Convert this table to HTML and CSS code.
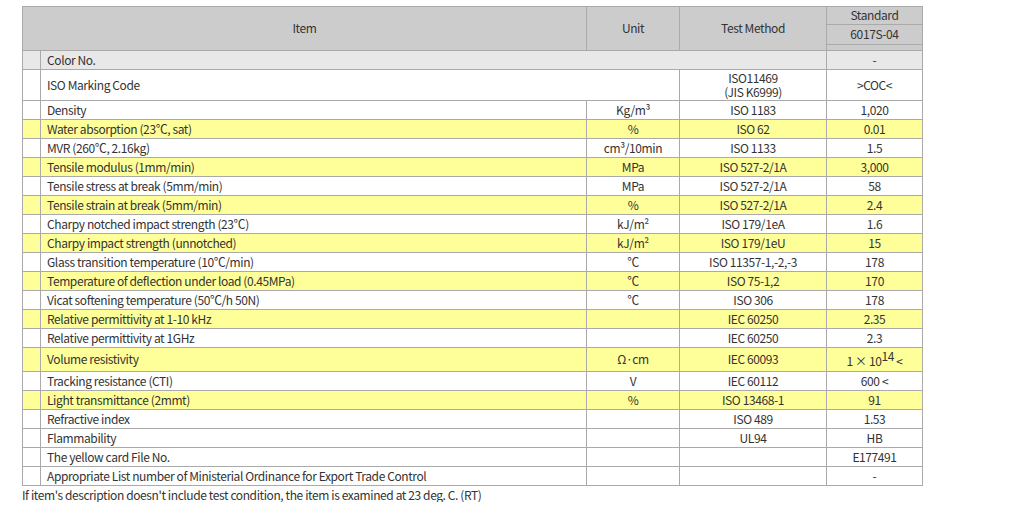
FILE: index.html
```html
<!DOCTYPE html>
<html lang="en">
<head>
<meta charset="utf-8">
<title>Properties</title>
<link rel="stylesheet" href="styles.css">
</head>
<body>
<div class="wrap">
<table class="spec">
  <colgroup>
    <col class="c-idx"><col class="c-item"><col class="c-unit"><col class="c-test"><col class="c-std">
  </colgroup>
  <thead>
    <tr class="h1">
      <th colspan="2" rowspan="3">Item</th>
      <th rowspan="3">Unit</th>
      <th rowspan="3">Test Method</th>
      <th>Standard</th>
    </tr>
    <tr class="h2"><th>6017S-04</th></tr>
    <tr class="h3"><th></th></tr>
  </thead>
  <tbody>
    <tr class="grey"><td></td><td class="name" colspan="3">Color No.</td><td>-</td></tr>
    <tr class="tall"><td></td><td class="name" colspan="2">ISO Marking Code</td><td class="two">ISO11469<br>(JIS K6999)</td><td>&gt;COC&lt;</td></tr>
    <tr><td></td><td class="name">Density</td><td>Kg/m³</td><td>ISO 1183</td><td>1,020</td></tr>
    <tr class="y"><td></td><td class="name">Water absorption (23℃, sat)</td><td>%</td><td>ISO 62</td><td>0.01</td></tr>
    <tr><td></td><td class="name">MVR (260℃, 2.16kg)</td><td>cm³/10min</td><td>ISO 1133</td><td>1.5</td></tr>
    <tr class="y"><td></td><td class="name">Tensile modulus (1mm/min)</td><td>MPa</td><td>ISO 527-2/1A</td><td>3,000</td></tr>
    <tr><td></td><td class="name">Tensile stress at break (5mm/min)</td><td>MPa</td><td>ISO 527-2/1A</td><td>58</td></tr>
    <tr class="y"><td></td><td class="name">Tensile strain at break (5mm/min)</td><td>%</td><td>ISO 527-2/1A</td><td>2.4</td></tr>
    <tr><td></td><td class="name">Charpy notched impact strength (23℃)</td><td>kJ/m²</td><td>ISO 179/1eA</td><td>1.6</td></tr>
    <tr class="y"><td></td><td class="name">Charpy impact strength (unnotched)</td><td>kJ/m²</td><td>ISO 179/1eU</td><td>15</td></tr>
    <tr><td></td><td class="name">Glass transition temperature (10℃/min)</td><td>℃</td><td>ISO 11357-1,-2,-3</td><td>178</td></tr>
    <tr class="y"><td></td><td class="name">Temperature of deflection under load (0.45MPa)</td><td>℃</td><td>ISO 75-1,2</td><td>170</td></tr>
    <tr><td></td><td class="name">Vicat softening temperature (50℃/h 50N)</td><td>℃</td><td>ISO 306</td><td>178</td></tr>
    <tr class="y"><td></td><td class="name">Relative permittivity at 1-10 kHz</td><td></td><td>IEC 60250</td><td>2.35</td></tr>
    <tr><td></td><td class="name">Relative permittivity at 1GHz</td><td></td><td>IEC 60250</td><td>2.3</td></tr>
    <tr class="y vr"><td></td><td class="name">Volume resistivity</td><td>Ω·cm</td><td>IEC 60093</td><td><span class="low">1 × 10<sup>14</sup> &lt;</span></td></tr>
    <tr><td></td><td class="name">Tracking resistance (CTI)</td><td>V</td><td>IEC 60112</td><td>600 &lt;</td></tr>
    <tr class="y"><td></td><td class="name">Light transmittance (2mmt)</td><td>%</td><td>ISO 13468-1</td><td>91</td></tr>
    <tr><td></td><td class="name">Refractive index</td><td></td><td>ISO 489</td><td>1.53</td></tr>
    <tr><td></td><td class="name">Flammability</td><td></td><td>UL94</td><td>HB</td></tr>
    <tr><td></td><td class="name">The yellow card File No.</td><td></td><td></td><td>E177491</td></tr>
    <tr><td></td><td class="name">Appropriate List number of Ministerial Ordinance for Export Trade Control</td><td></td><td></td><td>-</td></tr>
  </tbody>
</table>
<p class="note">If item's description doesn't include test condition, the item is examined at 23 deg. C. (RT)</p>
</div>
</body>
</html>
```
FILE: styles.css
```css
html, body {
  margin: 0;
  padding: 0;
  background: #ffffff;
}
body {
  font-family: "Noto Sans CJK JP", "Noto Sans", sans-serif;
  font-size: 12px;
  letter-spacing: -0.4px;
  color: #333333;
}
.wrap {
  padding: 6px 0 0 22px;
}
.spec {
  border-collapse: collapse;
  table-layout: fixed;
  width: 900px;
}
.c-idx { width: 18px; }
.c-item { width: 546px; }
.c-unit { width: 93px; }
.c-test { width: 147px; }
.c-std { width: 96px; }

.spec th, .spec td {
  border: 1px solid #aaaaaa;
  padding: 0 0 1px 0;
  text-align: center;
  vertical-align: middle;
  font-weight: normal;
  line-height: 14px;
  white-space: nowrap;
  overflow: hidden;
}
.spec th {
  background: #cccccc;
}
.h1 th { height: 16px; }
.h2 th { height: 18px; }
.h3 th { height: 5px; padding: 0; line-height: 0; }
.spec td {
  height: 17px;
  background: #ffffff;
}
.spec td.name {
  text-align: left;
  padding-left: 6px;
}
.spec tr.grey td { background: #e8e8e8; }
.spec tr.y td { background: #ffff99; }
.spec tr.tall td { height: 29px; }
.spec tr.vr td { height: 22px; }
.spec td.two { line-height: 14px; }
.low {
  position: relative;
  top: 2px;
}
.spec sup {
  font-size: 12px;
  line-height: 0;
  vertical-align: 5px;
}
.note {
  margin: 2px 0 0 0;
  line-height: 14px;
}
```
